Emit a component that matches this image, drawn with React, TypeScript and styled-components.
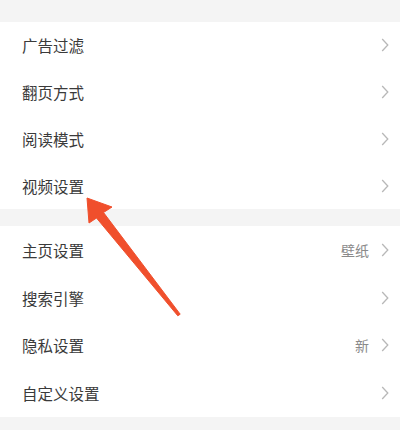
import React from 'react';
import styled, { createGlobalStyle } from 'styled-components';

const GlobalStyle = createGlobalStyle`
  html, body {
    margin: 0;
    padding: 0;
    background: #ffffff;
  }
  body {
    font-family: "Noto Sans CJK SC", "Noto Sans", sans-serif;
  }
`;

const Page = styled.div`
  position: relative;
  width: 407px;
  height: 430px;
  overflow: hidden;
  background: #ffffff;
`;

const Band = styled.div<{ $h: number }>`
  height: ${(p) => p.$h}px;
  width: 400px;
  background: #f4f4f4;
`;

const Section = styled.div`
  display: flex;
  flex-direction: column;
`;

const Row = styled.div<{ $h: number }>`
  display: flex;
  align-items: center;
  height: ${(p) => p.$h}px;
  padding: 0 18px 0 22px;
  box-sizing: border-box;
`;

const Label = styled.span`
  flex: 1;
  font-size: 15.5px;
  color: #3a3a3a;
`;

const Extra = styled.span`
  font-size: 14px;
  color: #8a8a8a;
  margin-right: 12px;
`;

const Chevron = () => (
  <svg width="8" height="14" viewBox="0 0 8 14">
    <path d="M1.2 1 L6.8 7 L1.2 13" fill="none" stroke="#b8b8b8" strokeWidth="1.3" />
  </svg>
);

const Arrow = styled.svg`
  position: absolute;
  left: 0;
  top: 0;
  pointer-events: none;
`;

type Item = { label: string; extra?: string };

const first: Item[] = [
  { label: '广告过滤' },
  { label: '翻页方式' },
  { label: '阅读模式' },
  { label: '视频设置' },
];

const second: Item[] = [
  { label: '主页设置', extra: '壁纸' },
  { label: '搜索引擎' },
  { label: '隐私设置', extra: '新' },
  { label: '自定义设置' },
];

const SettingsList = ({ items, rowHeight }: { items: Item[]; rowHeight: number }) => (
  <Section>
    {items.map((item) => (
      <Row key={item.label} $h={rowHeight}>
        <Label>{item.label}</Label>
        {item.extra && <Extra>{item.extra}</Extra>}
        <Chevron />
      </Row>
    ))}
  </Section>
);

export default function App() {
  return (
    <Page>
      <GlobalStyle />
      <Band $h={22} />
      <SettingsList items={first} rowHeight={46.75} />
      <Band $h={17} />
      <SettingsList items={second} rowHeight={47.75} />
      <Band $h={13} />
      <Arrow width="407" height="430" viewBox="0 0 407 430">
        <polygon
          points="87,198 112,207 103.5,212.5 180.2,314.2 177.8,315.8 96.5,218 89,223"
          fill="#f04f2c"
          stroke="#f04f2c"
          strokeWidth="1"
          strokeLinejoin="round"
        />
      </Arrow>
    </Page>
  );
}
